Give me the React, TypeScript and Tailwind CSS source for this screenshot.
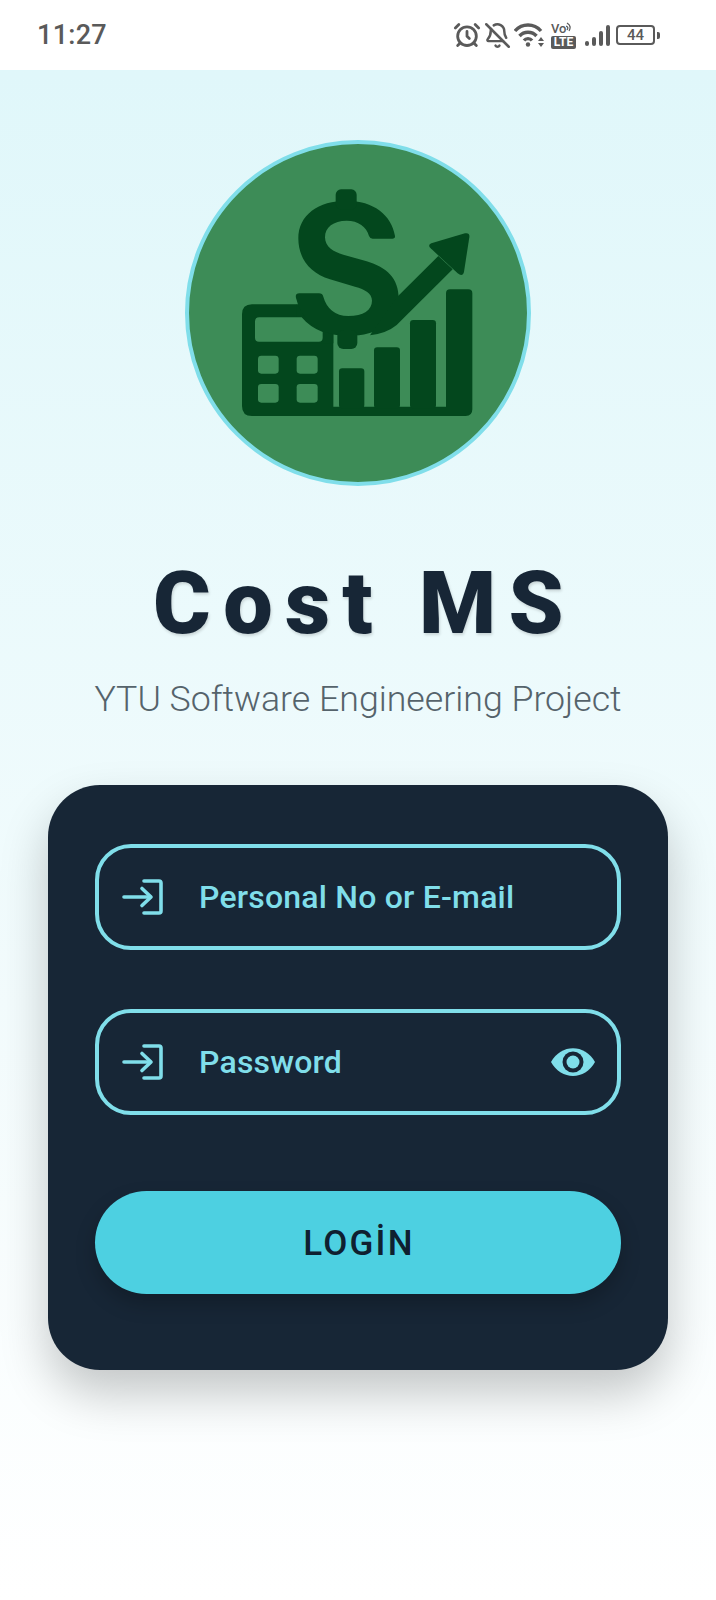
import { AlarmClock, BellOff } from "lucide-react";

function Logo() {
  return (
    <svg viewBox="57 42 1014 1014" className="h-full w-full" aria-hidden>
      <g fill="#03471d">
        {/* calculator + bars base */}
        <path d="M246 523 L400 523 L400 600 L490 600 L490 830 L828 830 L828 490 Q828 478 840 478 L895 478 Q907 478 907 490 L907 838 Q907 858 887 858 L246 858 Q216 858 216 828 L216 553 Q216 523 246 523 Z" />
        <path d="M380 523 L460 600 L490 600 L490 640 L380 640 Z" />
        <rect x="507" y="715" width="76" height="120" rx="10" />
        <rect x="612" y="652" width="78" height="183" rx="10" />
        <rect x="720" y="570" width="78" height="265" rx="10" />
        {/* dollar */}
        <path d="M675 318 Q676 326 667 326 L608 326 Q600 326 597 318 C590 290 565 272 530 272 C490 272 465 292 465 322 C465 350 490 366 520 374 L590 394 C650 412 686 445 686 505 C686 575 625 618 535 618 C450 618 395 570 380 510 Q372 490 388 490 L447 490 Q457 490 460 500 C470 535 495 558 535 558 C580 558 606 540 606 512 C606 490 585 478 555 470 L480 448 C420 430 385 385 385 325 C385 255 445 212 530 212 C610 212 665 255 675 318 Z" />
        <rect x="497" y="178" width="63" height="60" rx="16" />
        <rect x="502" y="600" width="60" height="57" rx="18" />
        {/* arrow */}
        <path d="M682 500 L805 378 L848 418 L680 585 Q650 610 600 616 Z" />
        <path d="M784 340 L885 310 Q900 307 898 322 L882 425 Q878 442 863 430 L782 355 Q772 345 784 340 Z" />
      </g>
      <g fill="#3d8c57">
        <path d="M268 562 L395 562 Q420 592 458 606 L458 623 Q458 635 446 635 L267 635 Q255 635 255 623 L255 575 Q255 562 268 562 Z" />
        <rect x="264" y="677" width="62" height="54" rx="10" />
        <rect x="380" y="677" width="63" height="54" rx="10" />
        <rect x="264" y="762" width="62" height="56" rx="10" />
        <rect x="380" y="762" width="63" height="56" rx="10" />
      </g>
    </svg>
  );
}

function LoginIcon() {
  return (
    <svg viewBox="0 0 41 36" className="h-[36px] w-[41px] shrink-0" fill="none" stroke="#80deea" strokeWidth="3.6" strokeLinecap="round" strokeLinejoin="round" aria-hidden>
      <path d="M22 2 H37 Q39 2 39 4 V32 Q39 34 37 34 H22" />
      <path d="M2 18 H28" />
      <path d="M20 9.5 L29 18 L20 26.5" />
    </svg>
  );
}

function StatusIcons() {
  return (
    <div className="flex items-center text-[#5a5a5a]">
      <AlarmClock size={28} strokeWidth={2.4} />
      <BellOff size={27} strokeWidth={2.2} className="ml-[3px]" />
      <svg viewBox="0 0 32 24" className="ml-[3px] h-[24px] w-[32px]" fill="none" stroke="currentColor" strokeWidth="3.4" aria-hidden>
        <path d="M1 8 C8 0 20 0 27 8" />
        <path d="M5.5 13 C10 8 18 8 22.5 13" />
        <path d="M10 17.5 C12 15 16 15 18 17.5" />
        <circle cx="14" cy="21.5" r="2.2" fill="currentColor" stroke="none" />
        <path d="M27 14 L30 18 H24 Z M27 24 L30 20 H24 Z" fill="currentColor" stroke="none" />
      </svg>
      <div className="ml-[5px] flex w-[25px] flex-col items-center">
        <div className="flex h-[13px] w-full items-start">
          <span className="text-[13px] leading-[13px] font-medium">Vo</span>
          <svg viewBox="0 0 8 10" className="h-[10px] w-[8px]" fill="none" stroke="currentColor" strokeWidth="1.2" aria-hidden>
            <path d="M1 1 Q6 4 3 9 M0 4 Q3 5 1 8" />
          </svg>
        </div>
        <span className="mt-[1px] h-[13px] w-full rounded-[2px] bg-[#5a5a5a] text-center text-[12px] leading-[13px] font-bold text-white">LTE</span>
      </div>
      <div className="ml-[9px] flex h-[22px] items-end gap-[3px]">
        <span className="h-[5px] w-[4px] rounded-[2px] bg-[#5a5a5a]" />
        <span className="h-[9px] w-[4px] rounded-[2px] bg-[#5a5a5a]" />
        <span className="h-[15px] w-[4px] rounded-[2px] bg-[#5a5a5a]" />
        <span className="h-[21px] w-[4px] rounded-[2px] bg-[#5a5a5a]" />
      </div>
      <div className="ml-[6px] flex h-[20px] w-[39px] items-center justify-center rounded-[4px] border-[2.5px] border-[#5a5a5a] text-[15px] font-medium">
        44
      </div>
      <span className="ml-[2px] h-[7px] w-[3px] rounded-r-[2px] bg-[#5a5a5a]" />
    </div>
  );
}

function Field({ label, eye }: { label: string; eye?: boolean }) {
  return (
    <div className="flex h-[106px] items-center rounded-[36px] border-4 border-[#80deea] pr-[22px] pl-[23px]">
      <LoginIcon />
      <span className="ml-[36px] flex-1 text-[32px] font-medium tracking-[0.2px] text-[#80deea]">{label}</span>
      {eye && (
        <svg viewBox="0 0 44 28" className="h-[28px] w-[44px]" aria-hidden>
          <path d="M0 14 C10 -4.5 34 -4.5 44 14 C34 32.5 10 32.5 0 14 Z" fill="#80deea" />
          <circle cx="22" cy="14" r="10.5" fill="#172636" />
          <circle cx="22" cy="14" r="6.5" fill="#80deea" />
        </svg>
      )}
    </div>
  );
}

export default function App() {
  return (
    <div className="flex min-h-[1600px] w-[716px] flex-col bg-white font-['Roboto',sans-serif]">
      <header className="flex h-[70px] items-center justify-between pr-[56px] pl-[37px]">
        <span className="text-[27px] font-medium tracking-[0.3px] text-[#5a5a5a]">11:27</span>
        <StatusIcons />
      </header>
      <main className="flex flex-1 flex-col items-center bg-gradient-to-b from-[#e0f7fa] to-[#ffffff]">
        <div className="mt-[70px] h-[346px] w-[346px] shrink-0 rounded-full border-[4px] border-[#80deea] bg-[#3d8c57]">
          <Logo />
        </div>
        <h1 className="mt-[67px] pl-[13px] text-[88px] leading-[100px] font-black tracking-[12.3px] text-[#172636] [text-shadow:1px_2px_3px_rgba(0,0,0,0.15)]">
          Cost MS
        </h1>
        <p className="mt-[24px] text-[35.7px] leading-[44px] font-light text-[#55636b]">YTU Software Engineering Project</p>
        <section className="mt-[64px] flex w-[620px] flex-col rounded-[52px] bg-[#172636] px-[47px] pt-[59px] pb-[76px] shadow-[0_24px_48px_rgba(0,0,0,0.22)]">
          <Field label="Personal No or E-mail" />
          <div className="h-[59px]" />
          <Field label="Password" eye />
          <button className="mt-[76px] h-[103px] rounded-full bg-[#4dd0e1] pt-[3px] pl-[2px] text-[35px] font-medium tracking-[2.2px] text-[#0f2030] shadow-[0_10px_20px_rgba(0,0,0,0.22)]">
            LOGİN
          </button>
        </section>
      </main>
    </div>
  );
}
